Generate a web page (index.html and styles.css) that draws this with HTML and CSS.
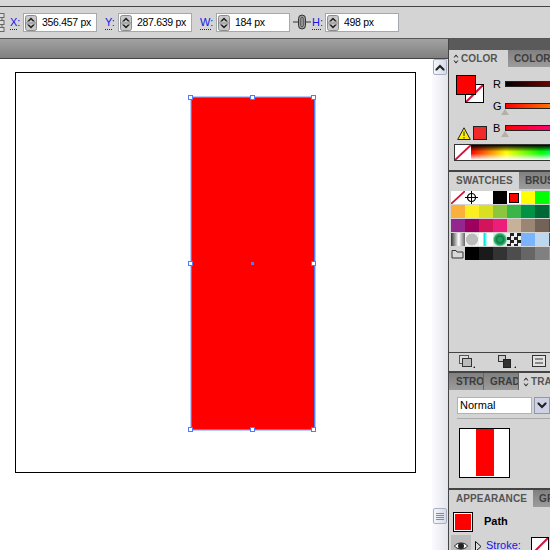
FILE: index.html
```html
<!DOCTYPE html>
<html lang="en">

<head>
    <meta charset="UTF-8">
    <title>Illustrator</title>
    <link rel="stylesheet" href="styles.css">
</head>

<body>

    <svg class="defs" width="0" height="0">
        <symbol id="spinner" viewBox="0 0 12 16">
            <rect x="0.5" y="0.5" width="11" height="15" rx="2" fill="#c9c9c9" stroke="#8b8b8b" />
            <path d="M0.5 8H11.5" stroke="#8b8b8b" />
            <path d="M6 2.5 L10 6.5 H8 L6 4.8 L4 6.5 H2 Z" fill="#222" />
            <path d="M6 13.5 L10 9.5 H8 L6 11.2 L4 9.5 H2 Z" fill="#222" />
        </symbol>
        <symbol id="none-slash" viewBox="0 0 16 16" preserveAspectRatio="none">
            <rect width="16" height="16" fill="#fff" />
            <path d="M0 16L16 0" stroke="#d2143a" stroke-width="2" />
        </symbol>
        <symbol id="updown" viewBox="0 0 6 10">
            <path d="M3 0.500L5.500 3.500H4.500L3 2L1.500 3.500H0.500Z" fill="#222" />
            <path d="M3 9.500L5.500 6.500H4.500L3 8L1.500 6.500H0.500Z" fill="#222" />
        </symbol>
    </svg>

    <!-- Control bar -->
    <div class="top-strip"></div>
    <div class="control-bar">
        <svg class="align-icon" width="5" height="19" viewBox="0 0 5 19">
            <path d="M2 3V16" stroke="#666" />
            <rect x="-2" y="0.5" width="6" height="4" fill="#ddd" stroke="#666" />
            <rect x="-2" y="7.5" width="6" height="4" fill="#ddd" stroke="#666" />
            <rect x="-2" y="14.5" width="6" height="4" fill="#ddd" stroke="#666" />
        </svg>
        <span class="coord-label coord-label-x">X:</span>
        <div class="field">
            <svg class="spinner" width="12" height="16"><use href="#spinner" /></svg>
            <span>356.457 px</span>
        </div>
        <span class="coord-label">Y:</span>
        <div class="field">
            <svg class="spinner" width="12" height="16"><use href="#spinner" /></svg>
            <span>287.639 px</span>
        </div>
        <span class="coord-label coord-label-w">W:</span>
        <div class="field">
            <svg class="spinner" width="12" height="16"><use href="#spinner" /></svg>
            <span>184 px</span>
        </div>
        <svg class="link-icon" width="18" height="16" viewBox="0 0 18 16">
            <path d="M0 8H5M13 8H18" stroke="#333" />
            <rect x="5.500" y="1" width="7" height="14" rx="3.500" fill="#999" stroke="#333" />
            <rect x="8" y="3.500" width="2" height="9" rx="1" fill="#eee" stroke="#333" />
        </svg>
        <span class="coord-label coord-label-h">H:</span>
        <div class="field">
            <svg class="spinner" width="12" height="16"><use href="#spinner" /></svg>
            <span>498 px</span>
        </div>
    </div>

    <div class="workspace">
        <!-- Document -->
        <div class="doc-column">
            <div class="doc-title"></div>
            <div class="doc-row">
                <div class="canvas">
                    <div class="artboard">
                        <div class="red-rect">
                            <span class="handle handle-tl"></span>
                            <span class="handle handle-tc"></span>
                            <span class="handle handle-tr"></span>
                            <span class="handle handle-ml"></span>
                            <span class="center-point"></span>
                            <span class="handle handle-mr"></span>
                            <span class="handle handle-bl"></span>
                            <span class="handle handle-bc"></span>
                            <span class="handle handle-br"></span>
                        </div>
                    </div>
                </div>
                <div class="scrollbar">
                    <div class="scroll-btn">
                        <svg width="10" height="7" viewBox="0 0 10 7">
                            <path d="M5 0.500L9.500 5V6.500H8L5 3.500L2 6.500H0.500V5Z" fill="#222" />
                        </svg>
                    </div>
                    <div class="scroll-thumb">
                        <span></span><span></span><span></span><span></span>
                    </div>
                </div>
            </div>
        </div>

        <!-- Panels -->
        <div class="dock">
            <div class="dock-head"></div>

            <div class="panel panel-color">
                <div class="tabs">
                    <div class="tab active tab-color">
                        <svg class="updown" width="6" height="10"><use href="#updown" /></svg>COLOR
                    </div>
                    <div class="tab">COLOR</div>
                </div>
                <div class="color-body">
                    <div class="color-left">
                        <div class="fill-stroke">
                            <div class="stroke-box">
                                <svg width="17" height="17"><use href="#none-slash" /></svg>
                            </div>
                            <div class="fill-box"></div>
                        </div>
                        <div class="gamut">
                            <svg width="14" height="13" viewBox="0 0 14 13">
                                <path d="M7 0.800L13.300 12.500H0.700Z" fill="#ffee00" stroke="#222" />
                                <path d="M7 4.500V9M7 10V11.500" stroke="#222" />
                            </svg>
                            <div class="gamut-swatch"></div>
                        </div>
                    </div>
                    <div class="sliders">
                        <div class="slider-row">
                            <span class="slider-label">R</span>
                            <div class="slider slider-r"></div>
                        </div>
                        <div class="slider-row">
                            <span class="slider-label">G</span>
                            <div class="slider slider-g"><span class="thumb"></span></div>
                        </div>
                        <div class="slider-row">
                            <span class="slider-label">B</span>
                            <div class="slider slider-b"><span class="thumb"></span></div>
                        </div>
                    </div>
                </div>
                <div class="spectrum">
                    <svg width="16" height="15"><use href="#none-slash" /></svg>
                    <div class="spectrum-colors"></div>
                </div>
            </div>

            <div class="panel panel-swatches">
                <div class="tabs">
                    <div class="tab active tab-swatches">SWATCHES</div>
                    <div class="tab">BRUS</div>
                </div>
                <div class="swatch-grid">
                    <div class="sw"><svg width="14" height="13"><use href="#none-slash" /></svg></div>
                    <div class="sw sw-white">
                        <svg width="13" height="13" viewBox="0 0 13 13">
                            <circle cx="6.500" cy="6.500" r="4" fill="none" stroke="#000" stroke-width="1.200" />
                            <path d="M6.500 0V13M0 6.500H13" stroke="#000" />
                        </svg>
                    </div>
                    <div class="sw sw-white"></div>
                    <div class="sw sw-black"></div>
                    <div class="sw sw-active"><span></span></div>
                    <div class="sw sw-yellow"></div>
                    <div class="sw sw-green"></div>
                    <div class="sw sw-cyan"></div>

                    <div class="sw sw-orange"></div>
                    <div class="sw sw-lemon"></div>
                    <div class="sw sw-lime"></div>
                    <div class="sw sw-leaf"></div>
                    <div class="sw sw-grass"></div>
                    <div class="sw sw-forest"></div>
                    <div class="sw sw-pine"></div>
                    <div class="sw sw-teal"></div>

                    <div class="sw sw-purple"></div>
                    <div class="sw sw-plum"></div>
                    <div class="sw sw-crimson"></div>
                    <div class="sw sw-pink"></div>
                    <div class="sw sw-tan"></div>
                    <div class="sw sw-taupe"></div>
                    <div class="sw sw-umber"></div>
                    <div class="sw sw-cocoa"></div>

                    <div class="sw sw-grad-gray"></div>
                    <div class="sw sw-radial-gray"></div>
                    <div class="sw sw-grad-cyan"></div>
                    <div class="sw sw-radial-green"></div>
                    <div class="sw sw-pattern"></div>
                    <div class="sw sw-sky"></div>
                    <div class="sw sw-pale"></div>
                    <div class="sw sw-slate"></div>

                    <div class="sw sw-folder">
                        <svg width="13" height="13" viewBox="0 0 13 13">
                            <path d="M1 11V3.500H5L6 5H12V11Z" fill="#d8d8d8" stroke="#333" />
                        </svg>
                    </div>
                    <div class="sw sw-black"></div>
                    <div class="sw sw-g90"></div>
                    <div class="sw sw-g80"></div>
                    <div class="sw sw-g70"></div>
                    <div class="sw sw-g60"></div>
                    <div class="sw sw-g50"></div>
                    <div class="sw sw-g40"></div>
                </div>
                <div class="panel-icons">
                    <svg width="16" height="14" viewBox="0 0 16 14">
                        <rect x="0.500" y="0.500" width="9" height="8" fill="#ddd" stroke="#555" />
                        <rect x="3.500" y="3.500" width="9" height="8" fill="#bbb" stroke="#333" />
                        <path d="M14 13H16V11Z" fill="#222" />
                    </svg>
                    <svg class="icon-groups" width="18" height="14" viewBox="0 0 18 14">
                        <rect x="0.500" y="0.500" width="7" height="6" fill="#ccc" stroke="#333" />
                        <rect x="5.500" y="4.500" width="7" height="8" fill="#333" stroke="#222" />
                        <path d="M16 13H18V11Z" fill="#222" />
                    </svg>
                    <svg class="icon-options" width="14" height="12" viewBox="0 0 14 12">
                        <rect x="0.500" y="0.500" width="13" height="11" fill="#e2e2e2" stroke="#333" />
                        <path d="M3 4H11M3 8H11" stroke="#333" />
                    </svg>
                </div>
            </div>

            <div class="panel panel-transparency">
                <div class="tabs">
                    <div class="tab tab-stroke">STRO</div>
                    <div class="tab tab-grad">GRAD</div>
                    <div class="tab active tab-trans">
                        <svg class="updown" width="6" height="10"><use href="#updown" /></svg>TRA
                    </div>
                </div>
                <div class="blend-row">
                    <div class="blend-select">Normal</div>
                    <div class="blend-btn">
                        <svg width="10" height="7" viewBox="0 0 10 7">
                            <path d="M5 6.500L9.500 2V0.500H8L5 3.500L2 0.500H0.500V2Z" fill="#222" />
                        </svg>
                    </div>
                </div>
                <div class="preview-wrap">
                    <div class="preview"><span></span></div>
                </div>
            </div>

            <div class="panel panel-appearance">
                <div class="tabs">
                    <div class="tab active tab-appearance">APPEARANCE</div>
                    <div class="tab">GR</div>
                </div>
                <div class="path-row">
                    <div class="path-swatch"></div>
                    <span class="path-name">Path</span>
                </div>
                <div class="stroke-row">
                    <div class="eye-cell">
                        <svg width="14" height="10" viewBox="0 0 14 10">
                            <path d="M0.500 5C3 1 11 1 13.500 5C11 9 3 9 0.500 5Z" fill="#fff" stroke="#222" />
                            <circle cx="7" cy="5" r="3" fill="#222" />
                        </svg>
                    </div>
                    <svg class="expand-icon" width="7" height="11" viewBox="0 0 7 11">
                        <path d="M0.500 0.500L6 5.500L0.500 10.500Z" fill="#ddd" stroke="#111" />
                    </svg>
                    <span class="stroke-link">Stroke:</span>
                    <div class="stroke-swatch">
                        <svg width="16" height="16"><use href="#none-slash" /></svg>
                    </div>
                </div>
            </div>
        </div>
    </div>

</body>

</html>
```
FILE: styles.css
```css
/* Global Styles */
body {
    margin: 0;
    width: 550px;
    height: 550px;
    overflow: hidden;
    background-color: #d4d4d4;
    font-family: "Liberation Sans", Arial, sans-serif;
    font-size: 11px;
    color: #000;
}

svg {
    display: block;
    flex: none;
}

.defs {
    position: absolute;
}

/* Control bar */
.top-strip {
    height: 6px;
    background-color: #d8d8d8;
    border-bottom: 1px solid #444;
}

.control-bar {
    height: 32px;
    box-sizing: border-box;
    display: flex;
    align-items: flex-start;
    padding-top: 6px;
    background-color: #d4d4d4;
    border-bottom: 1px solid #555;
}

.coord-label {
    width: 8px;
    height: 14px;
    margin-left: 8px;
    margin-right: 5px;
    padding-top: 3px;
    color: #1414e6;
    background-image: linear-gradient(to right, #1414e6 50%, transparent 50%);
    background-size: 2px 1px;
    background-repeat: repeat-x;
    background-position: 0 16px;
}

.coord-label-x {
    margin-left: 5px;
}

.coord-label-w {
    width: 11px;
}

.coord-label-h {
    width: 9px;
    margin-left: 1px;
    margin-right: 4px;
}

.field {
    width: 74px;
    height: 19px;
    box-sizing: border-box;
    display: flex;
    align-items: center;
    gap: 5px;
    padding-left: 1px;
    background-color: white;
    border: 1px solid #a5a9ad;
    font-size: 10.5px;
    letter-spacing: -0.3px;
    line-height: 1;
    white-space: nowrap;
}

.link-icon {
    margin: 1px 0 0 3px;
}

/* Document */
.workspace {
    display: flex;
    height: 511px;
}

.doc-column {
    width: 448px;
    display: flex;
    flex-direction: column;
}

.doc-title {
    height: 20px;
    box-sizing: border-box;
    background: linear-gradient(#a2a2a2, #808080);
    border-bottom: 1px solid #444;
}

.doc-row {
    flex: 1;
    display: flex;
}

.canvas {
    width: 432px;
    background-color: white;
    padding: 13px 0 0 15px;
    box-sizing: border-box;
}

.artboard {
    position: relative;
    width: 401px;
    height: 401px;
    box-sizing: border-box;
    border: 1px solid #000;
    background-color: white;
}

.red-rect {
    position: absolute;
    left: 175px;
    top: 24px;
    width: 124px;
    height: 333px;
    box-sizing: border-box;
    background-color: #ff0000;
    border: 1px solid #4f7bff;
    box-shadow: 0 0 0 1px rgba(79, 123, 255, 0.4);
}

.handle {
    position: absolute;
    width: 5px;
    height: 5px;
    box-sizing: border-box;
    background-color: white;
    border: 1px solid #4f7bff;
}

.handle-tl { left: -4px; top: -3px; }
.handle-tc { left: 58px; top: -3px; }
.handle-tr { right: -2px; top: -3px; }
.handle-ml { left: -4px; top: 163px; }
.handle-mr { right: -2px; top: 163px; }
.handle-bl { left: -4px; bottom: -3px; }
.handle-bc { left: 58px; bottom: -3px; }
.handle-br { right: -2px; bottom: -3px; }

.center-point {
    position: absolute;
    left: 59px;
    top: 164px;
    width: 3px;
    height: 3px;
    background-color: #4f7bff;
}

.scrollbar {
    width: 16px;
    box-sizing: border-box;
    display: flex;
    flex-direction: column;
    align-items: center;
    background: linear-gradient(to right, #fbfbff, #e4e4ec);
}

.scroll-btn,
.scroll-thumb {
    width: 14px;
    box-sizing: border-box;
    display: flex;
    flex-direction: column;
    align-items: center;
    justify-content: center;
    background: linear-gradient(to right, #f4f6fb, #d6dbe8);
    border: 1px solid #a9afc0;
    border-radius: 2px;
}

.scroll-btn {
    height: 16px;
}

.scroll-thumb {
    height: 16px;
    margin-top: 433px;
    gap: 1px;
}

.scroll-thumb span {
    display: block;
    width: 8px;
    height: 1px;
    background-color: #8a8a8a;
}

/* Panels */
.dock {
    width: 102px;
    overflow: hidden;
    display: flex;
    flex-direction: column;
    background-color: #d4d4d4;
    border-left: 1px solid #444;
    box-sizing: border-box;
}

.dock-head {
    height: 11px;
    flex: none;
    background-color: #5a5a5a;
}

.panel {
    flex: none;
    box-sizing: border-box;
    background-color: #d4d4d4;
    border-bottom: 2px solid #444;
    overflow: hidden;
}

.tabs {
    display: flex;
    height: 17px;
    background: linear-gradient(#808080, #9c9c9c);
    font-size: 10px;
    font-weight: bold;
    letter-spacing: 0.1px;
    white-space: nowrap;
}

.tab {
    display: flex;
    align-items: center;
    box-sizing: border-box;
    padding-left: 6px;
    color: #3c3c3c;
    flex: none;
    overflow: hidden;
}

.tab.active {
    background-color: #d4d4d4;
    color: #555;
}

.updown {
    margin-right: 2px;
}

.tab-color { width: 59px; padding-left: 4px; }
.tab-swatches { width: 70px; padding-left: 7px; }
.tab-stroke { width: 35px; border-right: 1px solid #666; padding-left: 7px; }
.tab-grad { width: 35px; border-right: 1px solid #666; }
.tab-trans { width: 32px; padding-left: 4px; color: #333; }
.tab-appearance { width: 84px; padding-left: 7px; }

.panel-color { height: 122px; }
.panel-swatches { height: 201px; }
.panel-transparency { height: 117px; }
.panel-appearance { height: 60px; border-bottom: none; }

/* Color panel */
.color-body {
    display: flex;
    padding: 8px 0 0 7px;
}

.color-left {
    width: 37px;
    flex: none;
}

.fill-stroke {
    position: relative;
    width: 29px;
    height: 29px;
}

.fill-box {
    position: absolute;
    left: 0;
    top: 0;
    width: 20px;
    height: 20px;
    box-sizing: border-box;
    background-color: #ff0000;
    border: 1px solid #000;
}

.stroke-box {
    position: absolute;
    left: 9px;
    top: 9px;
    width: 19px;
    height: 19px;
    box-sizing: border-box;
    border: 1px solid #000;
}

.gamut {
    display: flex;
    align-items: center;
    gap: 2px;
    margin-top: 22px;
    padding-left: 1px;
}

.gamut-swatch {
    width: 14px;
    height: 14px;
    flex: none;
    box-sizing: border-box;
    background-color: #ee2a2a;
    border: 1px solid #222;
}

.sliders {
    display: flex;
    flex-direction: column;
    gap: 16px;
    flex: none;
    padding-top: 6px;
}

.slider-row {
    display: flex;
    align-items: flex-start;
    height: 6px;
}

.slider-label {
    width: 12px;
    margin-top: -2px;
    line-height: 11px;
}

.slider {
    position: relative;
    width: 100px;
    height: 6px;
    box-sizing: border-box;
    border: 1px solid #222;
}

.slider-r { background: linear-gradient(to right, #000, #ff0000); }
.slider-g { background: linear-gradient(to right, #ff0000, #ffff00); }
.slider-b { background: linear-gradient(to right, #ff0000, #ff00ff); }

.thumb {
    position: absolute;
    left: -5px;
    top: 5px;
    width: 0;
    height: 0;
    border-left: 4px solid transparent;
    border-right: 4px solid transparent;
    border-bottom: 6px solid #b5b0a5;
}

.spectrum {
    display: flex;
    box-sizing: border-box;
    margin: 4px 0 0 5px;
    height: 17px;
    border: 1px solid #333;
    border-right: none;
}

.spectrum-colors {
    flex: none;
    width: 100px;
    background: linear-gradient(#000 0, transparent 45%, transparent 55%, #fff 100%),
        linear-gradient(to right, #ff0000, #ffff00 35%, #00ff00 70%, #00ffff);
}

/* Swatches panel */
.panel-swatches .tabs {
    margin-bottom: 2px;
}

.swatch-grid {
    display: grid;
    grid-template-columns: repeat(8, 14px);
    grid-auto-rows: 14px;
    margin-left: 2px;
    width: 112px;
}

.sw {
    width: 14px;
    height: 13px;
}

.sw-white { background-color: #fff; }
.sw-black { background-color: #000; }
.sw-yellow { background-color: #ffff00; }
.sw-green { background-color: #00ff00; }
.sw-cyan { background-color: #00ffff; }
.sw-active { background-color: #fff; display: flex; align-items: center; justify-content: center; }
.sw-active span { width: 10px; height: 10px; background-color: #ff0000; border: 1px solid #000; box-sizing: border-box; }
.sw-orange { background-color: #fbb03b; }
.sw-lemon { background-color: #fcee21; }
.sw-lime { background-color: #d9e021; }
.sw-leaf { background-color: #8cc63f; }
.sw-grass { background-color: #39b54a; }
.sw-forest { background-color: #009245; }
.sw-pine { background-color: #006837; }
.sw-teal { background-color: #22b573; }
.sw-purple { background-color: #93278f; }
.sw-plum { background-color: #9e005d; }
.sw-crimson { background-color: #d4145a; }
.sw-pink { background-color: #ed1e79; }
.sw-tan { background-color: #c7b299; }
.sw-taupe { background-color: #998675; }
.sw-umber { background-color: #736357; }
.sw-cocoa { background-color: #534741; }
.sw-grad-gray { background: linear-gradient(to right, #333, #fff 55%, #666); }
.sw-radial-gray { background: radial-gradient(circle, #bbb 60%, #eee 65%); }
.sw-grad-cyan { background: linear-gradient(to right, #fff 25%, #00e5e5 40%, #fff 60%); }
.sw-radial-green { background: radial-gradient(circle, #1a9e5a 25%, #0d7a45 35%, #33b36b 60%, #dfeee5 75%); }
.sw-pattern { background: repeating-conic-gradient(#222 0 25%, #eee 0 50%) 0 0 / 7px 7px; }
.sw-sky { background-color: #7ab4ff; }
.sw-pale { background-color: #bdd7ee; }
.sw-slate { background-color: #4d4d4d; }
.sw-g90 { background-color: #1a1a1a; }
.sw-g80 { background-color: #333; }
.sw-g70 { background-color: #4d4d4d; }
.sw-g60 { background-color: #666; }
.sw-g50 { background-color: #808080; }
.sw-g40 { background-color: #999; }

.panel-icons {
    display: flex;
    align-items: flex-start;
    margin-top: 91px;
    height: 18px;
    padding: 2px 0 0 10px;
    border-top: 1px solid #444;
}

.icon-groups { margin-left: 23px; }
.icon-options { margin-left: 16px; }

/* Transparency panel */
.blend-row {
    display: flex;
    gap: 2px;
    margin: 7px 0 0 8px;
    padding-bottom: 4px;
    border-bottom: 1px solid #aaa;
}

.blend-select {
    width: 75px;
    height: 17px;
    box-sizing: border-box;
    flex: none;
    padding-left: 2px;
    line-height: 15px;
    background-color: white;
    border: 1px solid #a5b5c9;
}

.blend-btn {
    width: 16px;
    height: 17px;
    box-sizing: border-box;
    flex: none;
    display: flex;
    align-items: center;
    justify-content: center;
    background-color: #cfd2e4;
    border: 1px solid #8f97aa;
}

.preview-wrap {
    padding: 9px 0 0 10px;
}

.preview {
    width: 51px;
    height: 50px;
    box-sizing: border-box;
    display: flex;
    justify-content: center;
    background-color: white;
    border: 1px solid #000;
}

.preview span {
    display: block;
    width: 18px;
    height: 47px;
    background-color: #ff0000;
}

/* Appearance panel */
.path-row {
    display: flex;
    align-items: flex-start;
    height: 28px;
    box-sizing: border-box;
    padding: 5px 0 0 4px;
}

.path-swatch {
    width: 20px;
    height: 20px;
    box-sizing: border-box;
    background-color: #ff0000;
    border: 1px solid #000;
    outline: 1px solid #fff;
    outline-offset: -2px;
}

.path-name {
    margin: 3px 0 0 11px;
    font-weight: bold;
}

.stroke-row {
    display: flex;
    align-items: flex-start;
}

.eye-cell {
    width: 20px;
    height: 20px;
    margin-left: 2px;
    box-sizing: border-box;
    padding: 6px 0 0 3px;
    background-color: #bbb;
}

.expand-icon {
    margin: 6px 0 0 4px;
}

.stroke-link {
    margin: 4px 0 0 4px;
    width: 45px;
    flex: none;
    color: #1414e6;
}

.stroke-swatch {
    width: 18px;
    height: 18px;
    box-sizing: border-box;
    flex: none;
    margin-top: 2px;
    border: 1px solid #000;
}
```
